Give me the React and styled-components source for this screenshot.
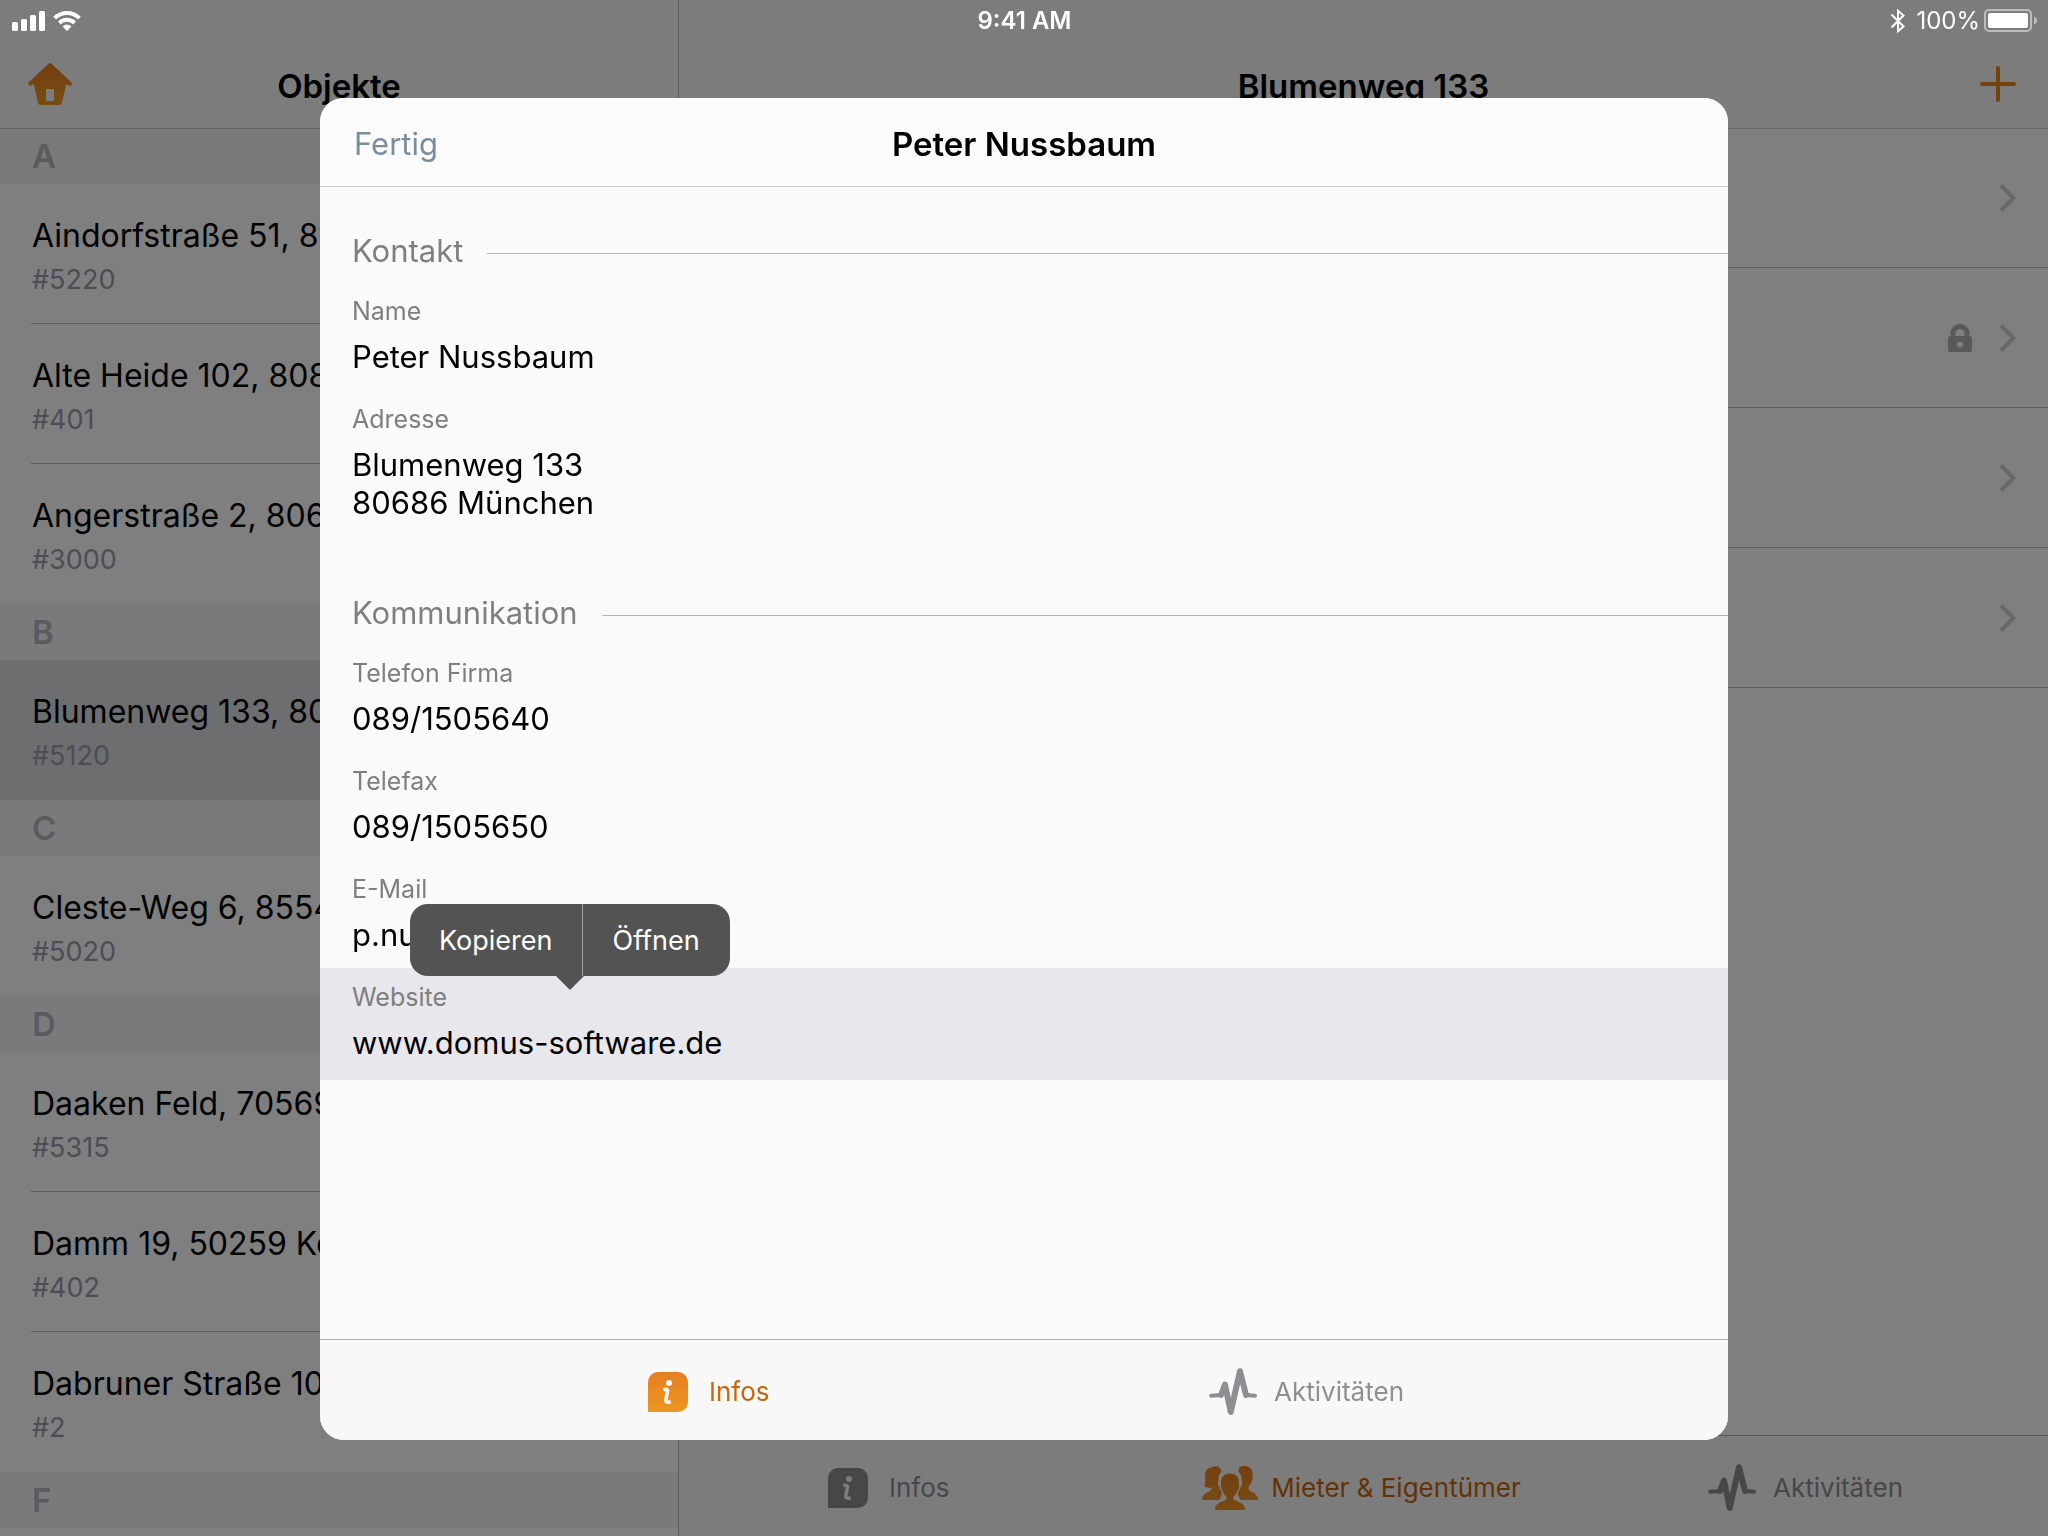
import React from 'react'
import styled, { createGlobalStyle } from 'styled-components'

const objectGroups = [
  {
    letter: 'A',
    items: [
      { id: '5220', title: 'Aindorfstraße 51, 81245 München' },
      { id: '401', title: 'Alte Heide 102, 80805 München' },
      { id: '3000', title: 'Angerstraße 2, 80639 München' },
    ],
  },
  {
    letter: 'B',
    items: [{ id: '5120', title: 'Blumenweg 133, 80686 München' }],
  },
  {
    letter: 'C',
    items: [{ id: '5020', title: 'Cleste-Weg 6, 85540 Haar' }],
  },
  {
    letter: 'D',
    items: [
      { id: '5315', title: 'Daaken Feld, 70569 Stuttgart' },
      { id: '402', title: 'Damm 19, 50259 Köln' },
      { id: '2', title: 'Dabruner Straße 10, 12107 Berlin' },
    ],
  },
  {
    letter: 'F',
    items: [],
  },
]

const detailRows = [{ locked: false }, { locked: true }, { locked: false }, { locked: false }]

const contactSections = [
  {
    title: 'Kontakt',
    fields: [
      { label: 'Name', lines: ['Peter Nussbaum'] },
      { label: 'Adresse', lines: ['Blumenweg 133', '80686 München'] },
    ],
  },
  {
    title: 'Kommunikation',
    fields: [
      { label: 'Telefon Firma', lines: ['089/1505640'] },
      { label: 'Telefax', lines: ['089/1505650'] },
      { label: 'E-Mail', lines: ['p.nussbaum@domus.de'] },
      { label: 'Website', lines: ['www.domus-software.de'], href: '#website' },
    ],
  },
]

const SignalIcon = () => (
  <svg width="33" height="20" viewBox="0 0 33 20" fill="#fff" aria-hidden="true">
    <rect x="0" y="11" width="6" height="9" rx="1.5" />
    <rect x="9" y="8" width="6" height="12" rx="1.5" />
    <rect x="18" y="4" width="6" height="16" rx="1.5" />
    <rect x="27" y="0" width="6" height="20" rx="1.5" />
  </svg>
)

const WifiIcon = () => (
  <svg width="28" height="20" viewBox="0 0 28 20" aria-hidden="true">
    <g fill="none" stroke="#fff" strokeWidth="4">
      <path d="M1.6 7.2a17.6 17.6 0 0 1 24.8 0" />
      <path d="M6.4 12a10.8 10.8 0 0 1 15.2 0" />
    </g>
    <path d="M9.6 15.4a6.2 6.2 0 0 1 8.8 0L14 20z" fill="#fff" />
  </svg>
)

const BluetoothIcon = () => (
  <svg width="16" height="24" viewBox="0 0 16 24" fill="none" stroke="#fff" strokeWidth="2" aria-hidden="true">
    <path d="M1.5 5.5l12 12L8 22.2V1.8l5.5 4.7-12 12" />
  </svg>
)

const BatteryIcon = () => (
  <svg width="53" height="24" viewBox="0 0 53 24" aria-hidden="true">
    <rect x="1" y="1" width="46" height="21" rx="4" fill="none" stroke="#bdbdbd" strokeWidth="2" />
    <rect x="4" y="4" width="40" height="15" rx="2" fill="#fff" />
    <path d="M50 7.5c2 .8 3 2.2 3 4s-1 3.2-3 4z" fill="#bdbdbd" />
  </svg>
)

const HomeIcon = () => (
  <svg width="44" height="42" viewBox="0 0 44 42" aria-hidden="true">
    <defs>
      <linearGradient id="home" x1="0" y1="0" x2="0" y2="1">
        <stop offset="0" stopColor="#e67e22" />
        <stop offset="1" stopColor="#ee9a22" />
      </linearGradient>
    </defs>
    <path
      fill="url(#home)"
      fillRule="evenodd"
      d="M20.4.7a2.5 2.5 0 0 1 3.2 0L43.3 19.2c1.2 1.3.4 3.5-1.4 3.5-1.6 0-2.5-1.4-3.7-1.5L34 39.6c-.4 1.6-1 2.4-2.6 2.4H12.6c-1.6 0-2.2-.8-2.6-2.4L5.8 21.2c-1.2.1-2.1 1.5-3.7 1.5-1.8 0-2.6-2.2-1.4-3.5zM19 26c-.6 0-1 .4-1 1v10c0 .6.4 1 1 1h6c.6 0 1-.4 1-1V27c0-.6-.4-1-1-1z"
    />
  </svg>
)

const PlusIcon = () => (
  <svg width="44" height="36" viewBox="0 0 44 36" stroke="#e8841a" strokeWidth="4" strokeLinecap="round" aria-hidden="true">
    <path d="M22 2v32M6 18h32" />
  </svg>
)

const ChevronIcon = () => (
  <svg width="17" height="28" viewBox="0 0 17 28" fill="none" stroke="#d0d0d6" strokeWidth="4" aria-hidden="true">
    <path d="M2 1.5L14.5 14 2 26.5" />
  </svg>
)

const LockIcon = () => (
  <svg width="24" height="28" viewBox="0 0 24 28" aria-hidden="true">
    <path d="M5 14V9.5a7 7 0 0 1 14 0V14" fill="none" stroke="#b2b2b2" strokeWidth="5" />
    <path
      fill="#b2b2b2"
      fillRule="evenodd"
      d="M2.5 12h19a2.5 2.5 0 0 1 2.5 2.5v11a2.5 2.5 0 0 1-2.5 2.5h-19A2.5 2.5 0 0 1 0 25.5v-11A2.5 2.5 0 0 1 2.5 12zM12 17.5a3 3 0 1 0 0 6 3 3 0 0 0 0-6z"
    />
  </svg>
)

const InfoIcon = ({ active }) => (
  <svg width="40" height="40" viewBox="0 0 40 40" aria-hidden="true">
    <defs>
      <linearGradient id="info" x1="0" y1="0" x2="0" y2="1">
        <stop offset="0" stopColor="#e67e22" />
        <stop offset="1" stopColor="#ed9722" />
      </linearGradient>
    </defs>
    <path
      d="M10 0h20a10 10 0 0 1 10 10v20a10 10 0 0 1-10 10H0V10A10 10 0 0 1 10 0z"
      fill={active ? 'url(#info)' : '#8e8e93'}
    />
    <circle cx="21" cy="11" r="3" fill="#f8f8f8" />
    <path d="M15.3 17.7c2.4-.9 4.6-.6 4.1 1.8l-1.5 7.7c-.5 3 1.6 3.5 4.8 2.5" fill="none" stroke="#f8f8f8" strokeWidth="3.6" />
  </svg>
)

const PulseIcon = () => (
  <svg
    width="48"
    height="48"
    viewBox="0 0 48 48"
    fill="none"
    stroke="#8e8e93"
    strokeLinecap="round"
    strokeLinejoin="round"
    aria-hidden="true"
  >
    <path strokeWidth="4" d="M2.2 27.7L12 27M46 27.7L37 27" />
    <path strokeWidth="6" d="M12 27l4-10.5L21.7 44 31 3.2 37 27" />
  </svg>
)

const PeopleIcon = () => (
  <svg width="56" height="44" viewBox="0 0 56 44" aria-hidden="true">
    <defs>
      <linearGradient id="people" x1="0" y1="0" x2="0" y2="1">
        <stop offset="0" stopColor="#e67e22" />
        <stop offset="1" stopColor="#ed9722" />
      </linearGradient>
    </defs>
    <g fill="url(#people)">
      <path d="M0 34c.3-5 3.5-7 7.5-8.8 1.500-.7 2-1.700 2-3.200-2.500 0-5-.5-7-1.700C4 16 2.500 10 3.500 6.500 4.500 3 7 2 9 1.800 12-1 18.500-.3 19.500 5.500 17 8 16 11 16.300 15c-.8 1.500-.6 4 .8 5.800.5 2 1.500 3.700 2.700 5v3.200c-.5 1.500-2 3.500-2.500 5z" />
      <path d="M56 34c-.3-5-3.500-7-7.500-8.800-2-.9-2.500-3.200-1.500-5.200 2-1.500 2.500-3.500 3.200-6 .8-1.500.8-3 .3-4.500C51 1.500 46 0 42 0c-3.500 0-5.500 2-5.700 5.500C39 8 40 11 39.700 15c.8 1.500.6 4-1 5.800-.5 2-1.500 3.700-2.700 5v3.200c.5 1.500 2 3.500 2.500 5z" />
      <path d="M13 44c.2-5.500 3.500-7.200 8-8.700 2.700-.9 3.800-2 3.800-4.300-2.500-1.700-3.800-4-4.300-7-1.800-1.500-2-4-1.300-6C18.500 11 22 7.500 28 7.500s9.500 3.500 8.800 10.500c.7 2 .5 4.500-1.300 6-.5 3-1.800 5.300-4.300 7 0 2.300 1.100 3.400 3.800 4.300 4.500 1.500 7.800 3.200 8 8.700z" />
    </g>
  </svg>
)

const tabIcons = { info: InfoIcon, people: PeopleIcon, pulse: PulseIcon }

const Tab = ({ icon, label, active }) => {
  const Icon = tabIcons[icon]
  return (
    <TabButton type="button" $active={active}>
      <TabIcon>
        <Icon active={active} />
      </TabIcon>
      {label}
    </TabButton>
  )
}

const StatusBar = () => (
  <StatusWrapper>
    <StatusGroup>
      <SignalIcon />
      <WifiIcon />
    </StatusGroup>
    <StatusTime>9:41 AM</StatusTime>
    <StatusGroup $end>
      <BluetoothIcon />
      <BatteryLabel>100%</BatteryLabel>
      <BatteryIcon />
    </StatusGroup>
  </StatusWrapper>
)

const Sidebar = () => (
  <SidebarWrapper>
    <NavBar>
      <NavButton type="button" aria-label="Start">
        <HomeIcon />
      </NavButton>
      <NavTitle>Objekte</NavTitle>
    </NavBar>
    <ObjectList>
      {objectGroups.map((group) => (
        <section key={group.letter}>
          <GroupLetter>{group.letter}</GroupLetter>
          {group.items.map((item) => (
            <ObjectRow key={item.id} href={`#${item.id}`} $selected={item.id === '5120'}>
              <ObjectText>
                <ObjectTitle>{item.title}</ObjectTitle>
                <ObjectNumber>#{item.id}</ObjectNumber>
              </ObjectText>
            </ObjectRow>
          ))}
        </section>
      ))}
    </ObjectList>
  </SidebarWrapper>
)

const Detail = () => (
  <DetailWrapper>
    <NavBar>
      <span />
      <NavTitle>Blumenweg 133</NavTitle>
      <NavButton type="button" aria-label="Hinzufügen">
        <PlusIcon />
      </NavButton>
    </NavBar>
    <DetailList>
      {detailRows.map((row, i) => (
        <DetailRow key={i}>
          {row.locked && <LockIcon />}
          <ChevronIcon />
        </DetailRow>
      ))}
    </DetailList>
    <TabBar $columns="1fr auto 1fr" $inset="145px">
      <Tab icon="info" label="Infos" />
      <Tab icon="people" label="Mieter & Eigentümer" active />
      <Tab icon="pulse" label="Aktivitäten" />
    </TabBar>
  </DetailWrapper>
)

const ContextMenu = () => (
  <MenuWrapper>
    <MenuButton type="button">Kopieren</MenuButton>
    <MenuButton type="button">Öffnen</MenuButton>
  </MenuWrapper>
)

const ContactModal = () => (
  <Backdrop>
    <ModalWrapper role="dialog" aria-labelledby="contact-name">
      <ModalHeader>
        <DoneButton type="button">Fertig</DoneButton>
        <NavTitle id="contact-name">Peter Nussbaum</NavTitle>
      </ModalHeader>
      <ModalBody>
        {contactSections.map((section) => (
          <ContactSection key={section.title}>
            <SectionTitle>{section.title}</SectionTitle>
            {section.fields.map((field) => (
              <Field key={field.label} $selected={!!field.href}>
                <FieldLabel>{field.label}</FieldLabel>
                {field.lines.map((line) => (
                  <FieldValue key={line}>
                    {field.href ? <FieldLink href={field.href}>{line}</FieldLink> : line}
                  </FieldValue>
                ))}
                {field.href && <ContextMenu />}
              </Field>
            ))}
          </ContactSection>
        ))}
      </ModalBody>
      <TabBar $columns="1fr 1fr" $inset="324px">
        <Tab icon="info" label="Infos" active />
        <Tab icon="pulse" label="Aktivitäten" />
      </TabBar>
    </ModalWrapper>
  </Backdrop>
)

const App = () => {
  return (
    <>
      <GlobalStyle />
      <Screen>
        <Sidebar />
        <Detail />
      </Screen>
      <ContactModal />
      <StatusBar />
    </>
  )
}

export default App


const GlobalStyle = createGlobalStyle`
  * {
    box-sizing: border-box;
  }
  body {
    margin: 0;
    font-family: Inter, Roboto, sans-serif;
    color: #000;
    background: #fff;
  }
  h1, h2, h3, dl, dd, dt {
    margin: 0;
    font-weight: 400;
  }
  button {
    border: none;
    padding: 0;
    background: none;
    font-family: inherit;
    cursor: pointer;
  }
  a {
    color: inherit;
    text-decoration: none;
  }
  svg {
    display: block;
    flex: none;
  }
`

const Screen = styled.div`
  display: grid;
  grid-template-columns: minmax(320px, 679px) 1fr;
  height: 100vh;
  overflow: hidden;
`

const StatusWrapper = styled.header`
  position: fixed;
  top: 0;
  left: 0;
  right: 0;
  height: 40px;
  padding: 1px 11px 0 12px;
  display: grid;
  grid-template-columns: 1fr auto 1fr;
  align-items: center;
  color: #fff;
  font-size: 24px;
`

const StatusGroup = styled.div`
  display: flex;
  align-items: center;
  gap: ${(props) => (props.$end ? '4px' : '8px')};
  justify-content: ${(props) => (props.$end ? 'flex-end' : 'flex-start')};
`

const StatusTime = styled.span`
  font-weight: 600;
`

const BatteryLabel = styled.span`
  margin-left: 6px;
`

const NavBar = styled.header`
  position: relative;
  display: grid;
  grid-template-columns: 1fr auto 1fr;
  align-items: center;
  height: 128px;
  padding: 44px 28px 0;
  background: #f8f8f8;
  box-shadow: 0 1px 0 #cccccc;

  > :last-child:not(h1) {
    justify-self: end;
  }
`

const NavTitle = styled.h1`
  font-size: 33px;
  font-weight: 600;
  line-height: 40px;
`

const NavButton = styled.button`
  justify-self: start;
  margin-bottom: 4px;
`

const SidebarWrapper = styled.aside`
  min-width: 0;
  height: 100vh;
  overflow: hidden;
  border-right: 1px solid #bcbcbc;
`

const ObjectList = styled.nav`
  white-space: nowrap;
`

const GroupLetter = styled.h2`
  height: 56px;
  padding-left: 32px;
  background: #f4f4f4;
  color: #b4b4c0;
  font-size: 33px;
  font-weight: 600;
  line-height: 56px;
`

const ObjectText = styled.div`
  height: 140px;
  margin-left: 31px;
  padding: 30px 0 0 1px;
  border-bottom: 1px solid #bcbcbc;
`

const ObjectRow = styled.a`
  display: block;
  background: ${(props) => (props.$selected ? '#dadce0' : '#fff')};

  &:last-child ${ObjectText} {
    border-bottom-color: transparent;
  }
`

const ObjectTitle = styled.div`
  font-size: 32px;
  line-height: 44px;
`

const ObjectNumber = styled.div`
  color: #9a9aac;
  font-size: 27px;
  line-height: 44px;
`

const DetailWrapper = styled.main`
  display: flex;
  flex-direction: column;
  min-width: 0;
  height: 100vh;
`

const DetailList = styled.div`
  flex: 1;
`

const DetailRow = styled.div`
  display: flex;
  align-items: center;
  justify-content: flex-end;
  gap: 27px;
  height: 140px;
  padding-right: 32px;
  border-bottom: 1px solid #bcbcbc;
`

const TabBar = styled.nav`
  position: relative;
  display: grid;
  grid-template-columns: ${(props) => props.$columns};
  flex: none;
  height: 100px;
  padding: 3px ${(props) => props.$inset} 0;
  background: #f8f8f8;
  box-shadow: 0 -1px 0 #adadad;
`

const TabButton = styled.button`
  display: flex;
  align-items: center;
  gap: 17px;
  color: ${(props) => (props.$active ? '#c8660a' : '#8e8e93')};
  font-size: 26px;
  white-space: nowrap;

  &:first-child {
    justify-self: start;
  }
  &:last-child {
    justify-self: end;
  }
`

const TabIcon = styled.span`
  display: flex;
  align-items: center;
  justify-content: center;
  width: 48px;
  height: 48px;
`

const Backdrop = styled.div`
  position: fixed;
  inset: 0;
  display: flex;
  padding: 98px 320px 96px;
  background: rgba(0, 0, 0, 0.5);
`

const ModalWrapper = styled.div`
  flex: 1;
  display: flex;
  flex-direction: column;
  min-width: 0;
  overflow: hidden;
  border-radius: 24px;
  background: #fafafa;
`

const ModalHeader = styled.header`
  position: relative;
  display: grid;
  grid-template-columns: 1fr auto 1fr;
  align-items: center;
  height: 88px;
  padding: 4px 34px 0;
  background: #fbfbfb;
  box-shadow: 0 1px 0 #cacaca;
`

const DoneButton = styled.button`
  justify-self: start;
  color: #7b8d9c;
  font-size: 31px;
  line-height: 40px;
`

const ModalBody = styled.div`
  flex: 1;
  min-height: 0;
`

const ContactSection = styled.section`
  & + & {
    padding-top: 12px;
  }
`

const SectionTitle = styled.h2`
  display: flex;
  align-items: center;
  gap: 24px;
  height: 96px;
  padding: 32px 0 0 32px;
  color: #7f7f7f;
  font-size: 31px;

  &::after {
    content: '';
    flex: 1;
    height: 1px;
    margin-top: 6px;
    background: #b6b6b6;
  }
`

const Field = styled.dl`
  position: relative;
  padding: 13px 32px ${(props) => (props.$selected ? '18px' : '14px')};
  background: ${(props) => (props.$selected ? '#e8e7ec' : 'transparent')};
`

const FieldLabel = styled.dt`
  margin-bottom: 11px;
  color: #7f7f7f;
  font-size: 25px;
  line-height: 32px;
`

const FieldValue = styled.dd`
  font-size: 31px;
  line-height: 38px;
`

const FieldLink = styled.a`
  color: #000;
`

const MenuWrapper = styled.div`
  position: absolute;
  top: -64px;
  left: 90px;
  display: flex;
  height: 72px;
  border-radius: 18px;
  background: #535353;

  &::after {
    content: '';
    position: absolute;
    top: 100%;
    left: 50%;
    margin-left: -14px;
    border: 14px solid transparent;
    border-top-color: #535353;
    border-bottom: none;
  }
`

const MenuButton = styled.button`
  padding: 0 30px 0 29px;
  color: #fff;
  font-size: 27px;

  & + & {
    border-left: 1px solid #a0a0a0;
  }
`
